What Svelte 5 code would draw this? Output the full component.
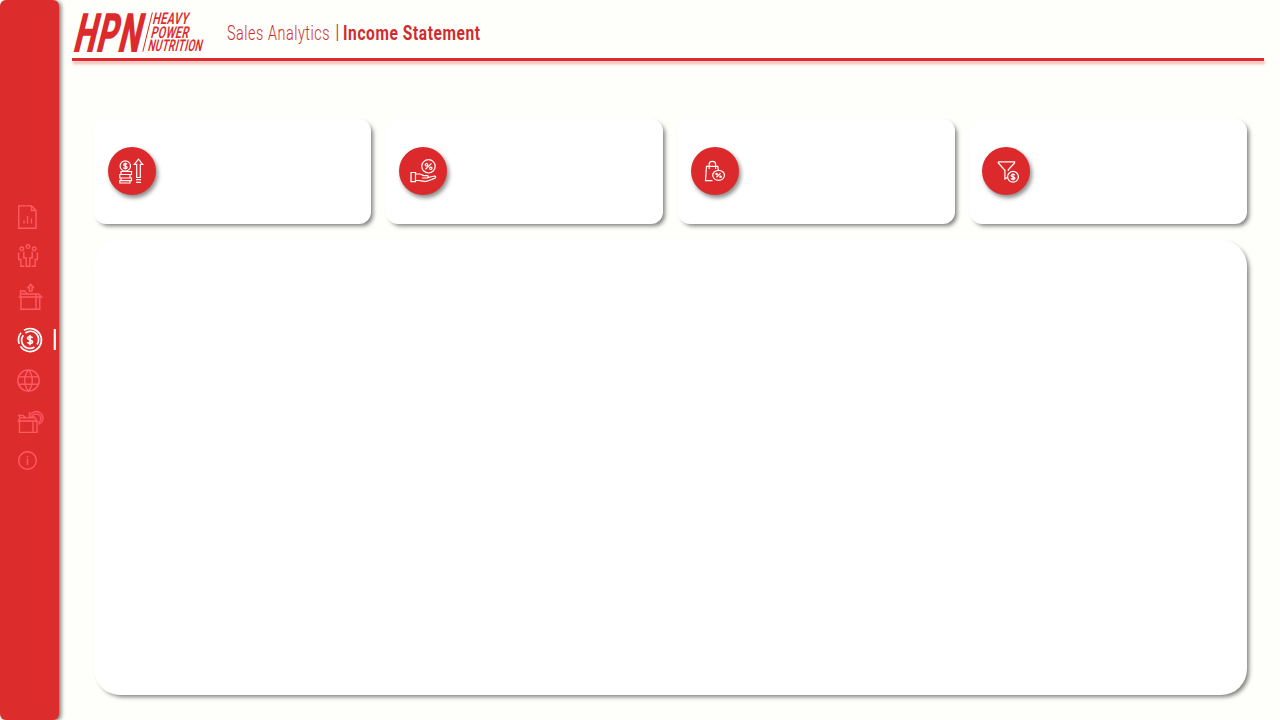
<script>
  const nav = [
    { id: 'report', top: 197, h: 40, d: 'M18.8 205.8H31.5V210.5H36V228.2H18.8ZM31.5 205.8L36 210.5M24 223.5V220.5M27.5 223.5V216M31.5 223.5V218.5' },
    { id: 'customers', top: 237, h: 40, d: 'M23.6 248.8a1.8 1.8 0 1 1-3.6 0a1.8 1.8 0 1 1 3.6 0M29.8 246.6a1.8 1.8 0 1 1-3.6 0a1.8 1.8 0 1 1 3.6 0M36 248.8a1.8 1.8 0 1 1-3.6 0a1.8 1.8 0 1 1 3.6 0M18.6 252.5V259.5H20.8V266.2H24.4M37.4 252.5V259.5H35.2V266.2H31.6M23.8 251.5V258H26.2V266.2H29.8V258H32.2V251.5' },
    { id: 'shipping', top: 277, h: 42, d: 'M21 297V309.2H39.8V297M19.5 297L21 294H38.5L41.5 297ZM20.5 293.5V291H25L27 294M36 294V309M29.3 291V287.5H27.8L30.7 284.3L33.5 287.5H32V291Z' },
    { id: 'income', top: 319, h: 41, active: true, d: 'M24 330.2A11.5 11.5 0 1 1 20.4 346.4M19.2 343.8A11.5 11.5 0 0 1 21 332.8M25.4 333A8.2 8.2 0 0 1 37 344.4M34.4 347A8.2 8.2 0 0 1 23.3 335.2M32.6 338C31.8 336.2 27.4 336.4 27.5 338.2C27.6 340.6 32.7 339.4 32.5 342C32.3 344 28.3 344 27.4 342.2M30 335V345.3' },
    { id: 'regions', top: 360, h: 41, d: 'M39.2 380.5a10.7 10.7 0 1 1-21.4 0a10.7 10.7 0 1 1 21.4 0M28.5 369.8C23.5 376 23.5 385 28.5 391.2C33.5 385 33.5 376 28.5 369.8M19.2 376.8H37.8M19.2 384.2H37.8' },
    { id: 'returns', top: 401, h: 40, d: 'M19.5 421V432.3H37V421M18.3 421L20 417.8H35L37 421ZM20.5 417.8L18.7 415.3H23L25.5 417.8M33 421V432', arrow: 'M29.4 412.2L31.2 413.4C36 409 43.2 412 43.2 418C43.2 421.3 41.5 423.4 39 424.3V421.8C41.5 419.6 40.8 416 38.2 414.8C36.3 414 34.5 414.4 33 415.3L34.4 417L29.2 416.8Z' },
    { id: 'info', top: 441, h: 40, d: 'M36.3 460.5a8.8 8.8 0 1 1-17.6 0a8.8 8.8 0 1 1 17.6 0M27.5 458.8V465M27.5 456V457.2' }
  ];

  const kpis = [
    { id: 'sales', x: 108, d: 'M130.5 166a5.2 5.2 0 1 1-10.4 0a5.2 5.2 0 1 1 10.4 0M127.1 164.4C126.2 162.9 123.3 163.6 123.7 165.2C124 166.4 127.4 165.8 127.1 167.5C126.7 169 124 168.8 123.4 167.6M125.3 162.6V169.6M121 171.5H131.5V174.5H121ZM119.8 174.5H130V178H119.8ZM121 178H131.5V180.6H121ZM119.8 180.6H130V183H119.8ZM136.7 177.5V164.3H134.3L138.5 159.2L142.7 164.3H140.3V177.5ZM136 179.7H141M136 182.3H141' },
    { id: 'discount', x: 399, d: 'M435.2 166.3a6.7 6.7 0 1 1-13.4 0a6.7 6.7 0 1 1 13.4 0M431.5 163.4L425.5 169.2M427.7 164.7a1.2 1.2 0 1 1-2.4 0a1.2 1.2 0 1 1 2.4 0M432 168.3a1.2 1.2 0 1 1-2.4 0a1.2 1.2 0 1 1 2.4 0M411 172.5H415.5V181.7H411ZM415.5 174H419.3C421.5 174 422 175.5 424.2 175.7H427C429 176 428.8 177.7 427 178H422M428.5 177.5L434.3 176C436 176 436.2 177.5 434.5 178.4L427 181.2C423 182 421 180.5 418.5 180.5H415.5' },
    { id: 'basket', x: 691, d: 'M712.5 180.6H705.5L706.5 166.3H717.8L718.3 170M709.2 169V164.2C709.2 160.4 715.6 160.4 715.6 164.2V169M724.5 175.3a5.9 5 0 1 1-11.8 0a5.9 5 0 1 1 11.8 0M720.5 173.3L716.5 177.2M717.3 174a.7 .7 0 1 1-1.4 0a.7 .7 0 1 1 1.4 0M721.3 176.7a.7 .7 0 1 1-1.4 0a.7 .7 0 1 1 1.4 0' },
    { id: 'margin', x: 982, d: 'M998.3 161.8H1014.6V163L1008.3 169.8V171M998.3 161.8V163L1004.9 170.3V179L1007.2 177.5M1018.4 176.8a5.4 5.4 0 1 1-10.8 0a5.4 5.4 0 1 1 10.8 0M1014.8 175.2C1014 173.6 1010.9 174.2 1011.2 175.8C1011.5 177.2 1015.2 176.6 1014.9 178.3C1014.4 179.9 1011.7 179.7 1011 178.4M1013 173.2V180.4' }
  ];
</script>

<div class="page">
  <nav class="sidebar">
    {#each nav as item (item.id)}
      <svg class="nav-icon" class:active={item.active} width="59" height={item.h} viewBox="0 {item.top} 59 {item.h}">
        <path d={item.d} />
        {#if item.arrow}<path class="arrow" d={item.arrow} />{/if}
        {#if item.active}<path class="marker" d="M54.8 329V350" />{/if}
      </svg>
    {/each}
  </nav>
  <main>
    <header>
      <svg class="logo" width="148" height="58" viewBox="72 0 148 58">
        <text class="mark" transform="translate(72 51.6) skewX(-14)" textLength="67.5" lengthAdjust="spacingAndGlyphs">HPN</text>
        <path d="M142.8 51.7L152.4 12.4" />
        <text class="words" transform="translate(152 24.3) skewX(-14)" textLength="36" lengthAdjust="spacingAndGlyphs">HEAVY</text>
        <text class="words" transform="translate(150.3 37.8) skewX(-14)" textLength="38" lengthAdjust="spacingAndGlyphs">POWER</text>
        <text class="words" transform="translate(147.2 51.4) skewX(-14)" textLength="54.5" lengthAdjust="spacingAndGlyphs">NUTRITION</text>
      </svg>
      <svg class="heading" width="280" height="58" viewBox="220 0 280 58">
        <text class="section" transform="translate(227 39.6)" textLength="103" lengthAdjust="spacingAndGlyphs">Sales Analytics</text>
        <text class="section" x="335" y="39">|</text>
        <text class="title" x="343" y="39.6" textLength="137.5" lengthAdjust="spacingAndGlyphs">Income Statement</text>
      </svg>
    </header>
    <div class="rule"></div>
    <div class="content">
      <section class="cards">
        {#each kpis as kpi (kpi.id)}
          <article class="card">
            <div class="badge">
              <svg width="48" height="48" viewBox="{kpi.x} 147 48 48"><path d={kpi.d} /></svg>
            </div>
          </article>
        {/each}
      </section>
      <section class="panel"></section>
    </div>
  </main>
</div>

<style>
  :global(body) { margin: 0; background: #fefffa; overflow: hidden; }
  .page { display: flex; width: 1280px; height: 720px; background: #fefffa; overflow: hidden; }
  .sidebar {
    flex: none; width: 59px; height: 720px; box-sizing: border-box; padding-top: 197px;
    display: flex; flex-direction: column; background: #dd2c2c; border-radius: 6px;
    box-shadow: 2px 1px 4px rgba(0, 0, 0, .55);
  }
  svg { display: block; flex: none; overflow: visible; }
  .nav-icon path { fill: none; stroke: #ff5c66; stroke-width: 1.35; }
  .nav-icon .arrow { fill: rgba(255, 92, 102, .45); stroke-width: 1; }
  .nav-icon.active path { stroke: #fff; stroke-width: 1.65; }
  .nav-icon.active .marker { stroke-width: 2.2; }
  main { flex: 1; padding: 0 16px 0 13px; }
  header { display: flex; height: 58px; }
  .rule { height: 3px; background: #dc2a2d; box-shadow: 1px 3px 3px rgba(225, 50, 50, .38); }
  text { font-family: Roboto, "Liberation Sans", sans-serif; }
  .logo text { fill: #dc2a2d; }
  .logo path { stroke: #dc2a2d; stroke-width: 1; }
  .mark { font-size: 54.5px; font-weight: 900; letter-spacing: 2px; }
  .words { font-size: 16.3px; font-weight: 600; letter-spacing: .5px; }
  .heading text { fill: #d02c30; }
  .section { font-size: 21px; font-weight: 300; letter-spacing: .8px; }
  .title { font-size: 21px; font-weight: 700; letter-spacing: .8px; }
  .content { padding: 58px 17px 0 22px; display: flex; flex-direction: column; gap: 16px; }
  .cards { display: grid; grid-template-columns: repeat(4, 277px); gap: 15px; }
  .card {
    height: 105px; box-sizing: border-box; padding: 28px 13px; background: #fff;
    border-radius: 12px; box-shadow: 3px 3px 4px -1px rgba(0, 0, 0, .5);
  }
  .card:first-child { padding-left: 14px; }
  .card:last-child { padding-left: 12px; }
  .badge { width: 48px; height: 48px; border-radius: 50%; background: #dc292b; box-shadow: 2px 3px 4px rgba(0, 0, 0, .45); }
  .badge path { fill: none; stroke: #fff; stroke-width: 1.2; }
  .panel { width: 1153px; height: 455px; background: #fff; border-radius: 26px; box-shadow: 3px 3px 4px -1px rgba(0, 0, 0, .5); }
</style>
